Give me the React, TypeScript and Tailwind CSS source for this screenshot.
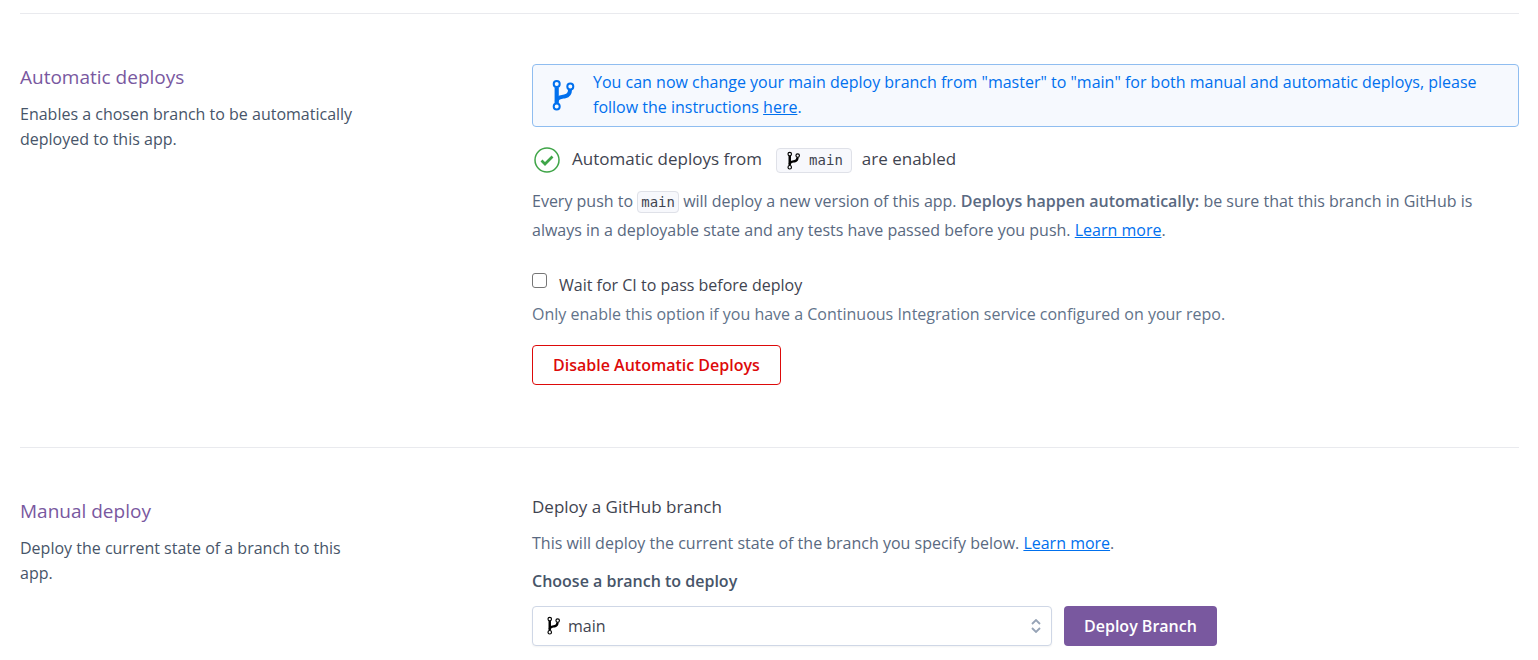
import React from "react";

function BranchIcon({ className }: { className: string }) {
  return (
    <svg viewBox="0 0 24 32" className={className} fill="none" stroke="currentColor" aria-hidden="true">
      <circle cx="4.700" cy="5" r="3" strokeWidth="2" />
      <circle cx="18.300" cy="7.500" r="3" strokeWidth="2" />
      <circle cx="4.700" cy="27.500" r="3" strokeWidth="2" />
      <path d="M4.700 8.300V24.200" strokeWidth="4.200" />
      <path d="M18 10.800c0 4-1.600 5.800-4.800 6.500s-8.200.4-8.500 5" strokeWidth="4" />
    </svg>
  );
}

function CheckIcon() {
  return (
    <svg viewBox="0 0 26 26" className="size-[26px] shrink-0" fill="none" stroke="#3fa548" aria-hidden="true">
      <circle cx="13" cy="13" r="12" strokeWidth="1.500" />
      <path d="M7.500 13.500l3.500 3.500 7.500-7.500" strokeWidth="2.700" />
    </svg>
  );
}

function Section({ title, description, children }: { title: string; description: string; children: React.ReactNode }) {
  return (
    <section className="grid grid-cols-[512fr_987fr] border-t border-[#e9eaee]">
      <div className="pt-[49px]">
        <h2 className="text-[19px] leading-7 text-[#79589f]">{title}</h2>
        <p className="mt-[11px] max-w-[350px] leading-[25px] text-[#475569]">{description}</p>
      </div>
      <div className="min-w-0">{children}</div>
    </section>
  );
}

export default function App() {
  return (
    <main className="bg-white pt-[13px] pr-[19px] pb-3 pl-5 font-['Open_Sans',sans-serif] text-base text-[#596981]">
      <Section title="Automatic deploys" description="Enables a chosen branch to be automatically deployed to this app.">
        <div className="pt-[50px] pb-[62px]">
          <div className="flex items-center rounded border border-[#8fbdf0] bg-[#f6f9fe] pt-[5px] pr-5 pb-1.5 pl-[19px] text-[#0070ee]">
            <BranchIcon className="mr-[17px] h-8 w-6 shrink-0" />
            <p className="leading-[25px]">
              You can now change your main deploy branch from "master" to "main" for both manual and automatic deploys, please follow the instructions{" "}
              <a href="#instructions" className="underline">here</a>.
            </p>
          </div>
          <div className="mt-[18px] flex items-center pl-0.5 text-[17px] leading-7 text-[#3f4450]">
            <CheckIcon />
            <span className="ml-3 pb-0.5">Automatic deploys from</span>
            <code className="mr-2.5 ml-3.5 flex h-[25px] items-center rounded border border-[#dfe1e8] bg-[#f7f8fc] pr-2 pl-2.5 font-['DejaVu_Sans_Mono',monospace] text-sm">
              <BranchIcon className="mr-2 h-[19px] w-[14px] text-black" />
              main
            </code>
            <span className="pb-0.5">are enabled</span>
          </div>
          <p className="mt-3 leading-[29px]">
            Every push to{" "}
            <code className="rounded border border-[#dfe1e8] bg-[#f7f8fc] px-[3px] py-0.5 font-['DejaVu_Sans_Mono',monospace] text-sm text-[#3f4450]">main</code>{" "}
            will deploy a new version of this app. <strong className="font-semibold">Deploys happen automatically:</strong> be sure that this branch in GitHub is always in a deployable state and any tests have passed before you push.{" "}
            <a href="#deploys" className="text-[#0070ee] underline">Learn more</a>.
          </p>
          <div className="mt-[26px] flex items-start">
            <input id="ci" type="checkbox" className="mt-0.5 size-[15px] appearance-none rounded-[3px] border border-[#767676] bg-white" />
            <label htmlFor="ci" className="ml-3 leading-[29px] text-[#3f4450]">Wait for CI to pass before deploy</label>
          </div>
          <p className="leading-[29px] text-[#62738a]">Only enable this option if you have a Continuous Integration service configured on your repo.</p>
          <button type="button" className="mt-4 h-10 rounded border border-[#dd0a0a] px-5 font-semibold text-[#dd0a0a]">Disable Automatic Deploys</button>
        </div>
      </Section>
      <Section title="Manual deploy" description="Deploy the current state of a branch to this app.">
        <div className="pt-[45px]">
          <h3 className="text-[17px] leading-7 text-[#3f4450]">Deploy a GitHub branch</h3>
          <p className="mt-2.5 leading-[25px]">
            This will deploy the current state of the branch you specify below. <a href="#branches" className="text-[#0070ee] underline">Learn more</a>.
          </p>
          <label htmlFor="branch" className="mt-[13px] block leading-[25px] font-semibold text-[#475569]">Choose a branch to deploy</label>
          <div className="mt-3 flex gap-3">
            <div className="relative w-[520px]">
              <select id="branch" className="h-10 w-full appearance-none rounded border border-[#cfd7e6] bg-white pr-8 pl-[35px] text-[#3f4450] shadow-xs">
                <option>main</option>
              </select>
              <BranchIcon className="pointer-events-none absolute top-[10px] left-[15px] h-[19px] w-[14px] text-black" />
              <svg viewBox="0 0 10 14" className="pointer-events-none absolute top-[13px] right-[11px] h-[14px] w-[10px]" fill="none" stroke="#96a3b6" strokeWidth="1.800" aria-hidden="true">
                <path d="M1 5l4-4 4 4M1 9l4 4 4-4" />
              </svg>
            </div>
            <button type="button" className="h-10 rounded bg-[#79589f] px-5 font-semibold text-white">Deploy Branch</button>
          </div>
        </div>
      </Section>
    </main>
  );
}
